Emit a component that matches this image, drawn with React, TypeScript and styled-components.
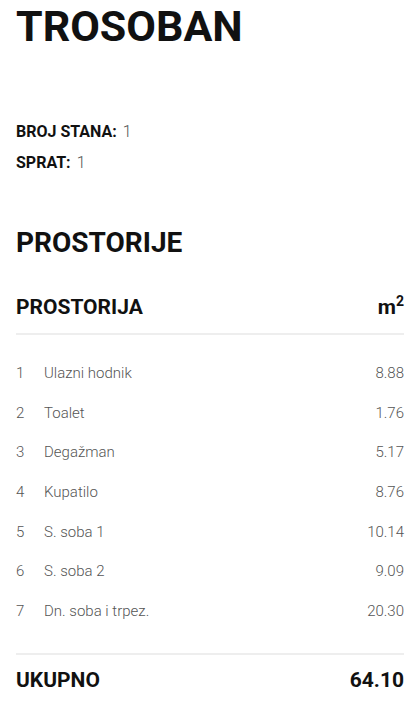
import styled, { createGlobalStyle } from "styled-components";

const GlobalStyle = createGlobalStyle`
  body {
    margin: 0;
    background: #fff;
    font-family: Roboto, "Liberation Sans", sans-serif;
    color: #111;
  }
`;

const Page = styled.div`
  padding: 0 16px;
`;

const Title = styled.h1`
  margin: 0;
  padding-top: 2px;
  font-size: 43px;
  line-height: 48px;
  font-weight: 700;
`;

const Facts = styled.div`
  margin-top: 71px;
  display: flex;
  flex-direction: column;
  gap: 10px;
`;

const Fact = styled.div`
  font-size: 16px;
  line-height: 21px;
`;

const FactLabel = styled.strong`
  font-weight: 700;
  margin-right: 6px;
`;

const FactValue = styled.span`
  font-weight: 300;
  color: #555;
`;

const SectionTitle = styled.h2`
  margin: 53px 0 0;
  font-size: 28px;
  line-height: 34px;
  font-weight: 700;
`;

const HeadRow = styled.div`
  margin-top: 27px;
  display: flex;
  justify-content: space-between;
  align-items: baseline;
  font-size: 21px;
  line-height: 28px;
  font-weight: 700;
  padding-bottom: 12px;
  border-bottom: 2px solid #eee;
`;

const Sup = styled.sup`
  font-size: 14px;
`;

const Rows = styled.div`
  padding: 18px 0 22px;
  display: flex;
  flex-direction: column;
`;

const Row = styled.div`
  display: flex;
  align-items: center;
  height: 39.7px;
  font-size: 15px;
  font-weight: 300;
  color: #555;
`;

const Num = styled.span`
  width: 28px;
`;

const Name = styled.span`
  flex: 1;
`;

const Total = styled.div`
  display: flex;
  justify-content: space-between;
  border-top: 2px solid #eee;
  padding-top: 11px;
  font-size: 21px;
  line-height: 28px;
  font-weight: 700;
`;

const rooms: [string, string][] = [
  ["Ulazni hodnik", "8.88"],
  ["Toalet", "1.76"],
  ["Degažman", "5.17"],
  ["Kupatilo", "8.76"],
  ["S. soba 1", "10.14"],
  ["S. soba 2", "9.09"],
  ["Dn. soba i trpez.", "20.30"],
];

export default function App() {
  return (
    <Page>
      <GlobalStyle />
      <Title>TROSOBAN</Title>
      <Facts>
        <Fact>
          <FactLabel>BROJ STANA:</FactLabel>
          <FactValue>1</FactValue>
        </Fact>
        <Fact>
          <FactLabel>SPRAT:</FactLabel>
          <FactValue>1</FactValue>
        </Fact>
      </Facts>
      <SectionTitle>PROSTORIJE</SectionTitle>
      <HeadRow>
        <span>PROSTORIJA</span>
        <span>
          m<Sup>2</Sup>
        </span>
      </HeadRow>
      <Rows>
        {rooms.map(([name, area], i) => (
          <Row key={name}>
            <Num>{i + 1}</Num>
            <Name>{name}</Name>
            <span>{area}</span>
          </Row>
        ))}
      </Rows>
      <Total>
        <span>UKUPNO</span>
        <span>64.10</span>
      </Total>
    </Page>
  );
}
